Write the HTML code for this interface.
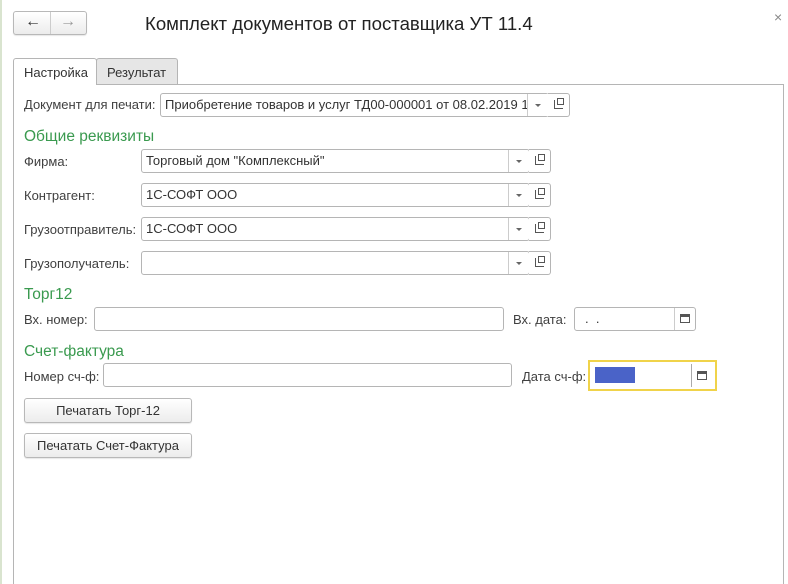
<!DOCTYPE html>
<html><head><meta charset="utf-8"><style>
*{box-sizing:border-box}
html,body{margin:0;width:788px;height:584px;overflow:hidden}
body{background:#fff;font-family:"Liberation Sans",Arial,sans-serif;font-size:13px;color:#404040;position:relative}
.a{position:absolute}
.f{position:absolute;border:1px solid #b5b5b5;border-radius:3px;background:#fff;height:24px;padding:0 4px;line-height:22px;color:#333;white-space:nowrap;overflow:hidden}
.l{position:absolute;line-height:14px}
.g{position:absolute;color:#3a9a4f;font-size:15.5px}
.tri{position:absolute;width:0;height:0;border-left:3px solid transparent;border-right:3px solid transparent;border-top:3px solid #666}
.btn{position:absolute;border:1px solid #b8b8b8;border-radius:3px;background:linear-gradient(#fff,#ececec);text-align:center;line-height:23px;color:#333;box-shadow:0 1px 1px rgba(0,0,0,.1)}
.cp{position:absolute;width:22px;height:24px;border:1px solid #b5b5b5;border-left:none;border-radius:0 3px 3px 0;background:#fff}
</style></head><body>
<div class="a" style="left:0;top:0;width:2px;height:584px;background:#d9e4cf"></div>
<div class="btn" style="left:13px;top:11px;width:74px;height:24px;"></div>
<div class="a" style="left:50px;top:12px;width:1px;height:22px;background:#ccc"></div>
<div class="a" style="left:25px;top:13px;font-size:16px;color:#333;font-weight:bold">←</div>
<div class="a" style="left:60px;top:13px;font-size:16px;color:#999;font-weight:bold">→</div>
<div class="a" style="left:145px;top:13px;font-size:18.6px;color:#222">Комплект документов от поставщика УТ 11.4</div>
<div class="a" style="left:774px;top:9px;font-size:14px;color:#888">×</div>

<div class="a" style="left:13px;top:84px;width:771px;height:510px;border:1px solid #b5b5b5"></div>
<div class="a" style="left:13px;top:58px;width:84px;height:27px;border:1px solid #b5b5b5;border-bottom:none;border-radius:3px 3px 0 0;background:#fff;padding:6px 0 0 10px;color:#333">Настройка</div>
<div class="a" style="left:96px;top:58px;width:82px;height:26px;border:1px solid #b5b5b5;border-bottom:none;border-radius:3px 3px 0 0;background:#e6e6e6;padding:6px 0 0 10px;color:#333">Результат</div>

<div class="l" style="left:24px;top:98px">Документ для печати:</div>
<div class="f" style="left:160px;top:93px;width:389px">Приобретение товаров и услуг ТД00-000001 от 08.02.2019 16:</div>
<div class="a" style="left:527px;top:94px;width:21px;height:22px;background:#fff;border-left:1px solid #ccc"><div class="tri" style="left:7px;top:10px"></div></div>
<div class="cp" style="left:548px;top:93px"><div class="a" style="left:6px;top:6px;width:9px;height:9px;border:1px solid #555;border-top:none;border-right:none"></div><div class="a" style="left:9px;top:4px;width:7px;height:7px;border:1px solid #555"></div></div>

<div class="g" style="left:24px;top:128px">Общие реквизиты</div>

<div class="l" style="left:24px;top:155px">Фирма:</div>
<div class="f" style="left:141px;top:149px;width:389px">Торговый дом "Комплексный"</div>
<div class="l" style="left:24px;top:189px">Контрагент:</div>
<div class="f" style="left:141px;top:183px;width:389px">1С-СОФТ ООО</div>
<div class="l" style="left:24px;top:223px">Грузоотправитель:</div>
<div class="f" style="left:141px;top:217px;width:389px">1С-СОФТ ООО</div>
<div class="l" style="left:24px;top:257px">Грузополучатель:</div>
<div class="f" style="left:141px;top:251px;width:389px"></div>

<div class="a" style="left:508px;top:150px;width:21px;height:22px;border-left:1px solid #ccc"><div class="tri" style="left:7px;top:10px"></div></div>
<div class="a" style="left:508px;top:184px;width:21px;height:22px;border-left:1px solid #ccc"><div class="tri" style="left:7px;top:10px"></div></div>
<div class="a" style="left:508px;top:218px;width:21px;height:22px;border-left:1px solid #ccc"><div class="tri" style="left:7px;top:10px"></div></div>
<div class="a" style="left:508px;top:252px;width:21px;height:22px;border-left:1px solid #ccc"><div class="tri" style="left:7px;top:10px"></div></div>
<div class="cp" style="left:529px;top:149px"><div class="a" style="left:6px;top:6px;width:9px;height:9px;border:1px solid #555;border-top:none;border-right:none"></div><div class="a" style="left:9px;top:4px;width:7px;height:7px;border:1px solid #555"></div></div>
<div class="cp" style="left:529px;top:183px"><div class="a" style="left:6px;top:6px;width:9px;height:9px;border:1px solid #555;border-top:none;border-right:none"></div><div class="a" style="left:9px;top:4px;width:7px;height:7px;border:1px solid #555"></div></div>
<div class="cp" style="left:529px;top:217px"><div class="a" style="left:6px;top:6px;width:9px;height:9px;border:1px solid #555;border-top:none;border-right:none"></div><div class="a" style="left:9px;top:4px;width:7px;height:7px;border:1px solid #555"></div></div>
<div class="cp" style="left:529px;top:251px"><div class="a" style="left:6px;top:6px;width:9px;height:9px;border:1px solid #555;border-top:none;border-right:none"></div><div class="a" style="left:9px;top:4px;width:7px;height:7px;border:1px solid #555"></div></div>

<div class="g" style="left:24px;top:286px">Торг12</div>
<div class="l" style="left:24px;top:313px">Вх. номер:</div>
<div class="f" style="left:94px;top:307px;width:410px"></div>
<div class="l" style="left:513px;top:313px">Вх. дата:</div>
<div class="f" style="left:574px;top:307px;width:122px;padding-left:10px">. &nbsp;.</div>
<div class="a" style="left:674px;top:308px;width:1px;height:22px;background:#ccc"></div>
<div class="a" style="left:680px;top:314px;width:10px;height:9px;border:1px solid #555;border-top:3px solid #555"></div>

<div class="g" style="left:24px;top:343px">Счет-фактура</div>
<div class="l" style="left:24px;top:370px">Номер сч-ф:</div>
<div class="f" style="left:103px;top:363px;width:409px"></div>
<div class="l" style="left:522px;top:370px">Дата сч-ф:</div>
<div class="a" style="left:588px;top:360px;width:129px;height:31px;border:2px solid #f0d34a;background:#fff"></div>
<div class="a" style="left:595px;top:367px;width:40px;height:16px;background:#4a63c8"></div>
<div class="a" style="left:691px;top:364px;width:1px;height:23px;background:#aaa"></div>
<div class="a" style="left:697px;top:371px;width:10px;height:9px;border:1px solid #555;border-top:3px solid #555"></div>

<div class="btn" style="left:24px;top:398px;width:168px;height:25px">Печатать Торг-12</div>
<div class="btn" style="left:24px;top:433px;width:168px;height:25px">Печатать Счет-Фактура</div>
</body></html>
